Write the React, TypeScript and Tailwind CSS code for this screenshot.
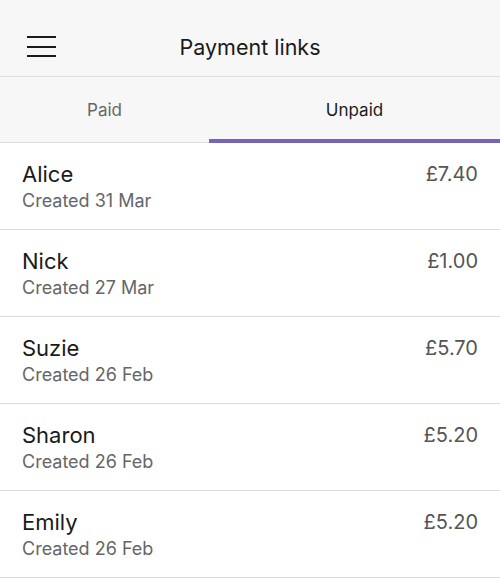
const links = [
  { name: "Alice", created: "Created 31 Mar", amount: "£7.40" },
  { name: "Nick", created: "Created 27 Mar", amount: "£1.00" },
  { name: "Suzie", created: "Created 26 Feb", amount: "£5.70" },
  { name: "Sharon", created: "Created 26 Feb", amount: "£5.20" },
  { name: "Emily", created: "Created 26 Feb", amount: "£5.20" },
];

const App = () => {
  return (
    <div className="w-[500px] h-[580px] overflow-hidden bg-white font-['Inter',sans-serif]">
      {/* Header */}
      <header className="relative flex items-center justify-center h-[77px] pt-[17px] bg-[#f7f7f7] border-b border-[#dcdcdc]">
        <button className="absolute left-[27px] top-[36px] flex flex-col gap-[7.5px]" aria-label="Menu">
          <span className="block w-[29px] h-[2px] bg-[#1a1a1a]" />
          <span className="block w-[29px] h-[2px] bg-[#1a1a1a]" />
          <span className="block w-[29px] h-[2px] bg-[#1a1a1a]" />
        </button>
        <h1 className="text-[21.5px] leading-[28px] text-[#1a1a1a]">Payment links</h1>
      </header>

      {/* Tabs */}
      <nav className="flex h-[66px] bg-[#f7f7f7] border-b border-[#dcdcdc]">
        <div className="w-[209px] flex items-center justify-center pt-[2px] text-[17px] text-[#666]">
          Paid
        </div>
        <div className="flex-1 relative flex items-center justify-center pt-[2px] text-[17px] text-[#1a1a1a]">
          Unpaid
          <span className="absolute left-0 right-0 -bottom-px h-[4px] bg-[#7565b8]" />
        </div>
      </nav>

      {/* List */}
      <ul>
        {links.map((link) => (
          <li
            key={link.name}
            className="flex justify-between h-[87px] px-[22px] border-b border-[#dcdcdc]"
          >
            <div className="pt-[18px]">
              <div className="text-[22px] leading-[26px] text-[#1a1a1a]">{link.name}</div>
              <div className="text-[18px] leading-[27px] text-[#666]">{link.created}</div>
            </div>
            <div className="pt-[18px] text-[20px] leading-[26px] text-[#555]">{link.amount}</div>
          </li>
        ))}
      </ul>
    </div>
  );
};

export default App;
